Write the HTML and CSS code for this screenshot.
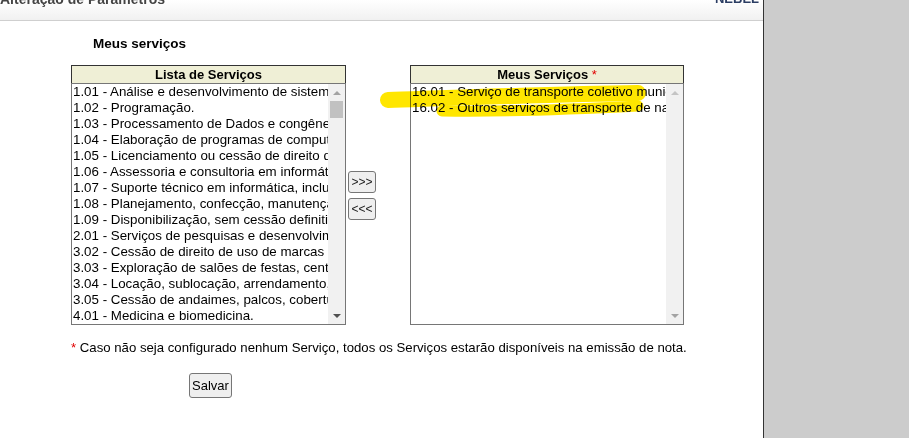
FILE: index.html
```html
<!DOCTYPE html>
<html lang="pt-BR">

<head>
    <meta charset="UTF-8">
    <meta name="viewport" content="width=device-width, initial-scale=1.0">
    <title>Alteração de Parâmetros</title>
    <link rel="stylesheet" href="styles.css">
</head>

<body>

    <div class="page">
        <div class="main">
            <div class="topbar">
                <span class="title">Alteração de Parâmetros</span>
                <span class="user">NEBEL</span>
            </div>

            <div class="content">
                <h3 class="section-title">Meus serviços</h3>

                <div class="picker">
                    <div class="box">
                        <div class="box-header">Lista de Serviços</div>
                        <div class="listbox">
                            <ul class="items">
                                <li>1.01 - Análise e desenvolvimento de sistemas.</li>
                                <li>1.02 - Programação.</li>
                                <li>1.03 - Processamento de Dados e congêneres.</li>
                                <li>1.04 - Elaboração de programas de computadores.</li>
                                <li>1.05 - Licenciamento ou cessão de direito de uso.</li>
                                <li>1.06 - Assessoria e consultoria em informática.</li>
                                <li>1.07 - Suporte técnico em informática, inclusive.</li>
                                <li>1.08 - Planejamento, confecção, manutenção.</li>
                                <li>1.09 - Disponibilização, sem cessão definitiva.</li>
                                <li>2.01 - Serviços de pesquisas e desenvolvimento.</li>
                                <li>3.02 - Cessão de direito de uso de marcas e sinais.</li>
                                <li>3.03 - Exploração de salões de festas, centro.</li>
                                <li>3.04 - Locação, sublocação, arrendamento, direito.</li>
                                <li>3.05 - Cessão de andaimes, palcos, coberturas.</li>
                                <li>4.01 - Medicina e biomedicina.</li>
                            </ul>
                            <div class="scrollbar">
                                <span class="arrow up"></span>
                                <div class="track"><div class="thumb"></div></div>
                                <span class="arrow down"></span>
                            </div>
                        </div>
                    </div>

                    <div class="moves">
                        <button class="move">&gt;&gt;&gt;</button>
                        <button class="move">&lt;&lt;&lt;</button>
                    </div>

                    <div class="box">
                        <div class="box-header">Meus Serviços <span class="req">*</span></div>
                        <div class="listbox">
                            <ul class="items">
                                <li>16.01 - Serviço de transporte coletivo municipal.</li>
                                <li>16.02 - Outros serviços de transporte de natureza.</li>
                            </ul>
                            <div class="scrollbar disabled">
                                <span class="arrow up"></span>
                                <div class="track"></div>
                                <span class="arrow down"></span>
                            </div>
                        </div>
                    </div>
                </div>

                <p class="note"><span class="req">*</span> Caso não seja configurado nenhum Serviço, todos os Serviços estarão disponíveis na emissão de nota.</p>

                <div class="actions">
                    <button class="save">Salvar</button>
                </div>
            </div>

            <!-- marca-texto amarelo por cima dos itens -->
            <svg class="marker" width="763" height="438" viewBox="0 0 763 438">
                <path d="M388 100 C 450 98, 560 94, 638 93" stroke="#ffe600" stroke-width="16" fill="none" stroke-linecap="round"/>
                <path d="M442 111 C 500 112, 580 109, 638 106" stroke="#ffe600" stroke-width="11" fill="none" stroke-linecap="round"/>
            </svg>
        </div>
        <div class="side"></div>
    </div>

</body>

</html>
```

FILE: styles.css
```css
* {
    box-sizing: border-box;
    margin: 0;
    padding: 0;
}

body {
    font-family: "Liberation Sans", Arial, sans-serif;
    background-color: #fff;
    color: #000;
    overflow: hidden;
}

.page {
    display: flex;
    height: 438px;
}

.main {
    position: relative;
    width: 763px;
    flex-shrink: 0;
}

.side {
    flex: 1;
    background-color: #cccccc;
    border-left: 1px solid #333;
}

/* barra de titulo (cortada pelo scroll) */
.topbar {
    height: 21px;
    display: flex;
    justify-content: space-between;
    overflow: hidden;
    background: linear-gradient(#ffffff, #f1f1f1);
    border-bottom: 1px solid #cfcfcf;
}

.topbar .title {
    margin-top: -9px;
    font-size: 14px;
    font-weight: bold;
    color: #444;
    line-height: 16px;
}

.topbar .user {
    margin-top: -9px;
    margin-right: 4px;
    font-size: 13px;
    font-weight: bold;
    color: #2b3d63;
    line-height: 16px;
}

.content {
    padding-left: 71px;
}

.section-title {
    font-size: 13.5px;
    font-weight: bold;
    margin: 15px 0 0 22px;
    line-height: 16px;
}

.picker {
    display: flex;
    margin-top: 13px;
}

.box {
    width: 275px;
}

.box + .moves + .box {
    width: 274px;
}

.box-header {
    height: 18px;
    background-color: #efefd6;
    border: 1px solid #333;
    border-bottom: none;
    text-align: center;
    font-size: 13px;
    font-weight: bold;
    line-height: 17px;
}

.req {
    color: #e00000;
    font-weight: normal;
}

.listbox {
    display: flex;
    height: 242px;
    border: 1px solid #767676;
    background-color: #fff;
}

.items {
    flex: 1;
    list-style: none;
    overflow: hidden;
    padding-left: 1px;
}

.items li {
    font-size: 13.33px;
    line-height: 16px;
    white-space: nowrap;
    overflow: hidden;
    color: #000;
}

.scrollbar {
    width: 17px;
    display: flex;
    flex-direction: column;
    background-color: #f1f1f1;
}

.scrollbar .track {
    flex: 1;
    padding: 0 2px;
}

.scrollbar .thumb {
    height: 17px;
    background-color: #c1c1c1;
}

.arrow {
    height: 17px;
    display: flex;
    align-items: center;
    justify-content: center;
}

.arrow::before {
    content: "";
    border-left: 4px solid transparent;
    border-right: 4px solid transparent;
}

.arrow.up::before {
    border-bottom: 4px solid #a3a3a3;
}

.arrow.down::before {
    border-top: 4px solid #505050;
}

.scrollbar.disabled .arrow.up::before {
    border-bottom-color: #c4c4c4;
}

.scrollbar.disabled .arrow.down::before {
    border-top-color: #a3a3a3;
}

.moves {
    width: 64px;
    padding: 106px 0 0 2px;
    display: flex;
    flex-direction: column;
    align-items: flex-start;
    gap: 5px;
}

.move {
    width: 28px;
    height: 22px;
    font-family: "Liberation Sans", Arial, sans-serif;
    font-size: 12px;
    color: #222;
    background-color: #efefef;
    border: 1px solid #767676;
    border-radius: 3px;
    padding: 0;
}

.note {
    margin-top: 15px;
    font-size: 13.2px;
    line-height: 16px;
}

.actions {
    margin: 17px 0 0 118px;
}

.save {
    width: 43px;
    height: 25px;
    font-family: "Liberation Sans", Arial, sans-serif;
    font-size: 13px;
    background-color: #efefef;
    border: 1px solid #767676;
    border-radius: 3px;
    padding: 0;
}

.marker {
    position: absolute;
    top: 0;
    left: 0;
    pointer-events: none;
    mix-blend-mode: multiply;
}
```
